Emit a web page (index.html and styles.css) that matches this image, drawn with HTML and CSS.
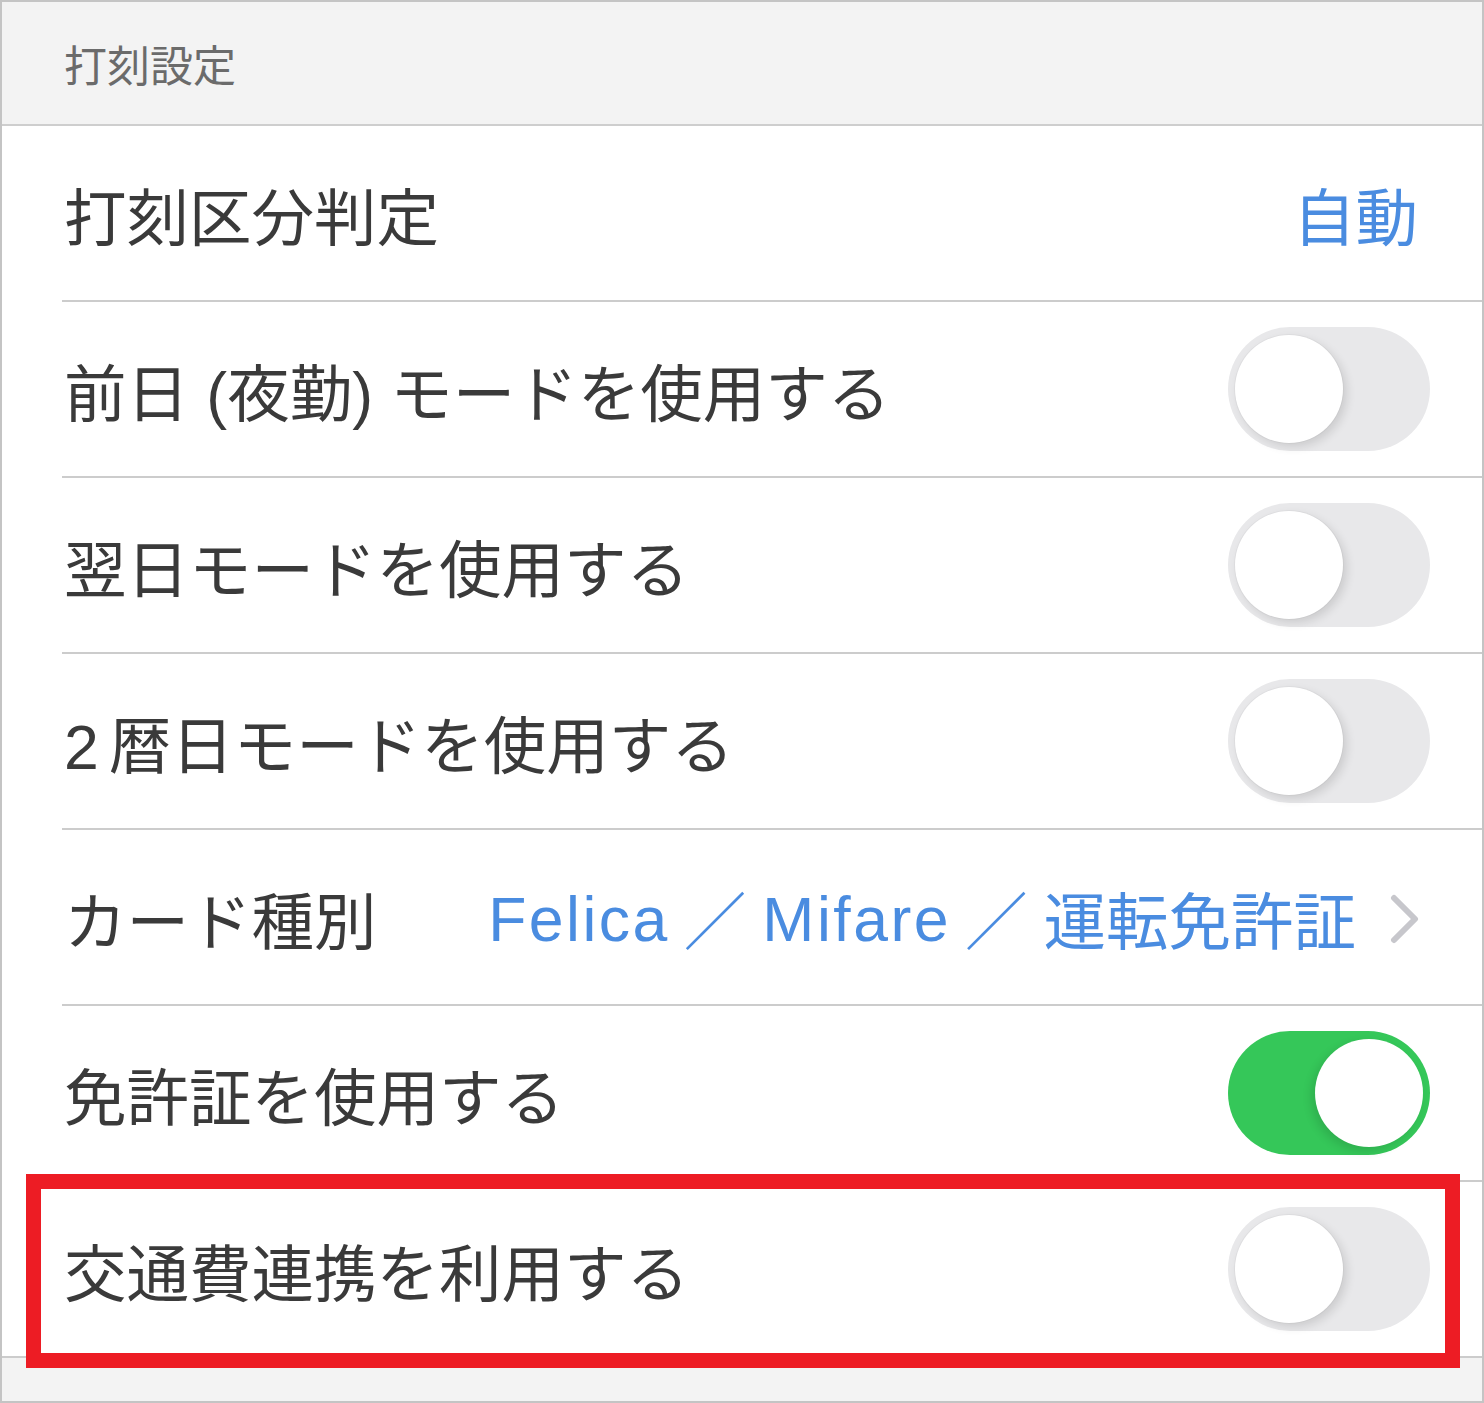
FILE: index.html
```html
<!DOCTYPE html>
<html lang="ja">
<head>
<meta charset="utf-8">
<title>打刻設定</title>
<link rel="stylesheet" href="styles.css">
</head>
<body>
<div class="screen">
  <div class="section-header">打刻設定</div>
  <ul class="list">
    <li class="row">
      <span class="label">打刻区分判定</span>
      <span class="value">自動</span>
    </li>
    <li class="row">
      <span class="label">前日 (夜勤) モードを使用する</span>
      <span class="toggle"><span class="knob"></span></span>
    </li>
    <li class="row">
      <span class="label">翌日モードを使用する</span>
      <span class="toggle"><span class="knob"></span></span>
    </li>
    <li class="row">
      <span class="label"><span class="digit">2</span>暦日モードを使用する</span>
      <span class="toggle"><span class="knob"></span></span>
    </li>
    <li class="row">
      <span class="label">カード種別</span>
      <span class="value value-link"><span class="latin">Felica</span><span class="sep">／</span><span class="latin">Mifare</span><span class="sep">／</span>運転免許証<svg class="chevron" width="30" height="50" viewBox="0 0 30 50"><polyline points="4,4 25,25 4,46" fill="none" stroke="#c7c7cc" stroke-width="6" stroke-linecap="round" stroke-linejoin="round"/></svg></span>
    </li>
    <li class="row">
      <span class="label">免許証を使用する</span>
      <span class="toggle on"><span class="knob"></span></span>
    </li>
    <li class="row">
      <span class="label">交通費連携を利用する</span>
      <span class="toggle"><span class="knob"></span></span>
    </li>
  </ul>
  <div class="footer"></div>
  <div class="highlight"></div>
</div>
</body>
</html>
```
FILE: styles.css
```css
html, body {
  margin: 0;
  padding: 0;
  background: #ffffff;
}

.screen {
  position: relative;
  box-sizing: border-box;
  width: 1484px;
  height: 1403px;
  border: 2px solid #c4c4c4;
  background: #f3f3f3;
  font-family: "Liberation Sans", "Noto Sans CJK JP", sans-serif;
  overflow: hidden;
}

.section-header {
  box-sizing: border-box;
  height: 124px;
  border-bottom: 2px solid #cecece;
  padding-left: 62px;
  display: flex;
  align-items: center;
  font-family: "Noto Sans CJK JP", sans-serif;
  font-size: 43px;
  color: #6b6b6b;
  background: #f3f3f3;
}

.list {
  list-style: none;
  margin: 0;
  padding: 0;
  background: #ffffff;
  border-bottom: 2px solid #cccccc;
}

.row {
  box-sizing: border-box;
  height: 176px;
  margin-left: 60px;
  padding-left: 2px;
  padding-right: 52px;
  border-bottom: 2px solid #cccccc;
  display: flex;
  align-items: center;
  justify-content: space-between;
}

.row:last-child {
  border-bottom: none;
  height: 174px;
}

.label {
  font-size: 62.5px;
  color: #3a3a3a;
  white-space: nowrap;
}

.digit {
  letter-spacing: 10px;
}

.value {
  font-size: 62.5px;
  color: #4a8ce0;
  white-space: nowrap;
  margin-right: 12px;
}

.value-link {
  display: flex;
  align-items: center;
  margin-right: 10px;
}

.latin {
  letter-spacing: 2.5px;
  margin-top: 4px;
}

.sep {
  margin: 0 16px 0 14px;
}

.chevron {
  margin-left: 34px;
  margin-top: 4px;
}

.toggle {
  position: relative;
  box-sizing: border-box;
  width: 202px;
  height: 124px;
  border-radius: 62px;
  background: #e8e8ea;
  flex: none;
}

.toggle .knob {
  position: absolute;
  top: 8px;
  left: 7px;
  width: 108px;
  height: 108px;
  border-radius: 50%;
  background: #ffffff;
  box-shadow: 0 0 0 1px rgba(0, 0, 0, 0.03), 4px 4px 10px rgba(0, 0, 0, 0.12);
}

.toggle.on {
  background: #35c759;
}

.toggle.on .knob {
  left: 87px;
  box-shadow: -4px 4px 10px rgba(0, 0, 0, 0.12);
}

.footer {
  height: 41px;
  background: #f3f3f3;
}

.highlight {
  position: absolute;
  left: 24px;
  top: 1172px;
  width: 1434px;
  height: 194px;
  box-sizing: border-box;
  border: 15px solid #ed1c24;
  pointer-events: none;
}
```
